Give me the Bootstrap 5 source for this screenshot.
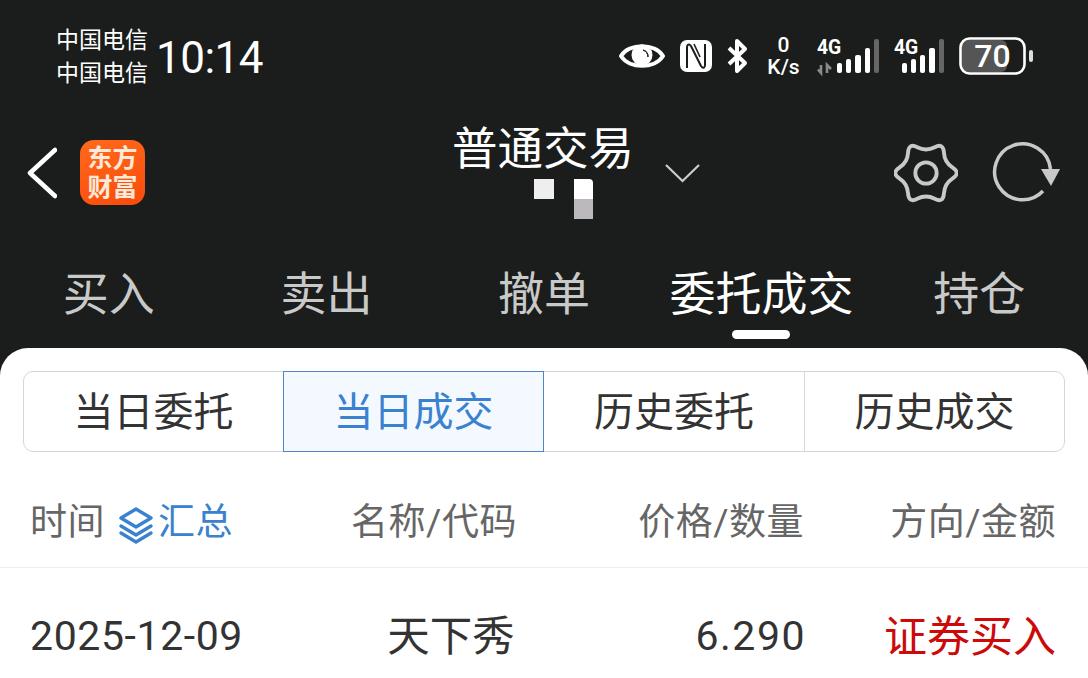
<!DOCTYPE html>
<html lang="zh-CN">
<head>
  <meta charset="UTF-8">
  <meta name="viewport" content="width=device-width, initial-scale=1.0">
  <title>普通交易</title>
  <link href="https://cdn.jsdelivr.net/npm/bootstrap@5.3.0/dist/css/bootstrap.min.css" rel="stylesheet">
  <style>
    html, body { height: 100%; overflow: hidden; }
    body {
      background-color: #1a1d1b;
      font-family: Roboto, "Noto Sans CJK SC", sans-serif;
      color: #333;
    }
    .screen { height: 678px; }

    .status-row { height: 105px; flex-shrink: 0; padding: 6px 54px 0 56px; color: #fff; }
    .carrier { font-size: 23px; line-height: 33px; width: 100px; padding-top: 2px; }
    .clock { font-size: 44px; line-height: 1; letter-spacing: -0.5px; padding-top: 4px; }
    .status-icons { margin-left: auto; height: 42px; }
    .eye-icon { margin-right: 15px; margin-left: 2px; }
    .nfc-icon { margin-right: 14px; }
    .speed-text { width: 35px; font-size: 21px; line-height: 22px; text-align: center; font-weight: 500; margin-left: 18px; }
    .sig-wrap { height: 38px; margin-left: 16px; margin-top: 4px; }
    .sig-wrap.second { margin-left: 14px; }
    .gen-text { font-size: 21px; line-height: 18px; margin-top: -1px; font-weight: 700; color: #fff; transform: scaleX(.92); transform-origin: 0 0; }
    .batt-wrap { position: relative; width: 75px; height: 38px; margin-left: 15px; }
    .batt-num { position: absolute; left: 0; width: 67px; top: 0; text-align: center; font-size: 32px; line-height: 38px; font-weight: 500; }

    .title-row { height: 135px; flex-shrink: 0; padding-left: 27px; padding-right: 27px; }
    .left-group { width: 427px; gap: 23px; }
    .logo-box {
      width: 65px; height: 65px; border-radius: 14px;
      background: linear-gradient(160deg, #ff6a1c, #fb4a0c);
      color: #ffe9d8; font-size: 25px; line-height: 29px; font-weight: 700;
      text-align: center; padding-top: 4px;
    }
    .title-block { width: 178px; margin-top: -6px; }
    .title-text { font-size: 45.500px; line-height: 52px; padding-top: 3px; color: #fff; white-space: nowrap; margin-left: -2px; }
    .mask-blocks { gap: 20px; padding-left: 80px; margin-top: 3px; height: 40px; }
    .mask-a { width: 20px; height: 20px; background: #eee; }
    .mask-b { width: 19px; height: 40px; background: linear-gradient(#fff 50%, #bbb9bb 50%); border-top-right-radius: 4px; }
    .caret-box { margin-left: 33px; }
    .right-group { margin-left: auto; gap: 33px; }

    .tab-row { height: 108px; flex-shrink: 0; }
    .tab-item { position: relative; height: 108px; font-size: 46px; line-height: 1; color: #c9c9c9; padding-top: 31px; }
    .tab-item.on { color: #fff; }
    .tab-item.on::after {
      content: ""; position: absolute; left: 50%; bottom: 9px; width: 58px; height: 9px;
      margin-left: -30px; border-radius: 5px; background: #fff;
    }

    .sheet { background: #fff; border-radius: 28px 28px 0 0; padding-top: 23px; flex: 1; min-height: 0; overflow: hidden; }
    .seg-group { margin: 0 23px; width: 1042px; display: flex; }
    .seg-group > .seg-btn {
      height: 81px; font-size: 40px; line-height: 1; color: #333; padding: 2px 0 0;
      border: 1px solid #d6d6d6; border-radius: 10px; background: #fff; flex: 0 0 261px; transition: none;
    }
    .seg-group > .seg-btn.wide-one { flex-basis: 262px; }
    .seg-group > .seg-btn.picked, .seg-group > .seg-btn.picked:hover { color: #3a82d0; border-color: #4a86c8; background: #f4f9ff; z-index: 2; }

    .grid-row { display: grid; grid-template-columns: 290px 228px 256px 252px; padding: 0 32px 0 30px; align-items: center; }
    .head-row { height: 116px; padding-top: 26px; border-bottom: 1px solid #eee; font-size: 37px; letter-spacing: .5px; color: #666; white-space: nowrap; }
    .stack-icon { margin: 4px 4px 0 13px; }
    .sum-link { color: #3a82d0; }
    .data-row { height: 138px; font-size: 43px; color: #333; white-space: nowrap; }
    .name-cell { padding-left: 34px; font-size: 42.500px; }
    .num-cell { font-size: 41px; letter-spacing: .6px; }
    .price-cell { letter-spacing: 1.500px; margin-right: -2px; }
    .dir-buy { color: #cc0a0a; }
  </style>
</head>
<body>
  <div class="screen d-flex flex-column">
    <div class="status-row d-flex align-items-center">
      <div class="carrier">中国电信<br>中国电信</div>
      <div class="clock">10:14</div>
      <div class="status-icons d-flex align-items-center">
        <svg width="46" height="34" viewBox="0 0 46 34" class="eye-icon">
          <path d="M2 17C10 4 36 4 44 17C36 30 10 30 2 17Z" fill="none" stroke="#fff" stroke-width="4" stroke-linejoin="round"/>
          <circle cx="23" cy="16" r="10.500" fill="#fff"/>
          <path d="M24 11a6 6 0 0 1 5 7a8 8 0 0 0-5-7Z" fill="#1a1d1b" stroke="#1a1d1b"/>
        </svg>
        <svg width="32" height="34" viewBox="0 0 32 34" class="nfc-icon">
          <rect x="0" y="1" width="32" height="32" rx="7" fill="#fff"/>
          <path d="M7 29V9C7 5 9 4.500 11 7L21 27C23 30 25 29 25 26V5" fill="none" stroke="#1a1d1b" stroke-width="2"/>
          <path d="M14 5L20 18" stroke="#1a1d1b" stroke-width="1.600"/>
        </svg>
        <svg width="22" height="36" viewBox="0 0 22 36">
          <path d="M3 10L19 25L11 33V3L19 11L3 26" fill="none" stroke="#fff" stroke-width="4" stroke-linejoin="round"/>
        </svg>
        <div class="speed-text">0<br>K/s</div>
        <div class="sig-wrap position-relative">
          <svg width="63" height="38" viewBox="0 0 63 38">
            <path d="M4 26V34L1 30.500M4 26M10 34V26L14 30" fill="none" stroke="#8a8a8a" stroke-width="2.600"/>
            <rect x="20" y="24" width="5" height="10" rx="2" fill="#fff"/>
            <rect x="29" y="20" width="5" height="14" rx="2" fill="#fff"/>
            <rect x="38" y="16" width="6" height="18" rx="2" fill="#fff"/>
            <rect x="48" y="9" width="5" height="25" rx="2" fill="#fff"/>
            <rect x="57" y="0" width="5" height="34" rx="2" fill="#666"/>
          </svg>
          <span class="gen-text position-absolute top-0 start-0">4G</span>
        </div>
        <div class="sig-wrap second position-relative">
          <svg width="50" height="38" viewBox="0 0 50 38">
            <rect x="8" y="24" width="5" height="10" rx="2" fill="#fff"/>
            <rect x="17" y="20" width="5" height="14" rx="2" fill="#fff"/>
            <rect x="26" y="16" width="5" height="18" rx="2" fill="#fff"/>
            <rect x="35" y="9" width="6" height="25" rx="2" fill="#fff"/>
            <rect x="45" y="0" width="5" height="34" rx="2" fill="#666"/>
          </svg>
          <span class="gen-text position-absolute top-0 start-0">4G</span>
        </div>
        <div class="batt-wrap">
          <svg width="75" height="38" viewBox="0 0 75 38">
            <rect x="3" y="3" width="45" height="32" rx="6" fill="#555"/>
            <rect x="1.500" y="1.500" width="64" height="35" rx="9" fill="none" stroke="#fff" stroke-width="2.600"/>
            <rect x="70" y="13" width="4" height="12" rx="2" fill="#ddd"/>
          </svg>
          <div class="batt-num">70</div>
        </div>
      </div>
    </div>

    <div class="title-row d-flex align-items-center">
      <div class="left-group d-flex align-items-center">
        <svg width="30" height="52" viewBox="0 0 30 52">
          <path d="M28 3L3 26L28 49" fill="none" stroke="#fff" stroke-width="4.500" stroke-linecap="round" stroke-linejoin="round"/>
        </svg>
        <div class="logo-box">东方<br>财富</div>
      </div>
      <div class="title-block">
        <div class="title-text">普通交易</div>
        <div class="mask-blocks d-flex">
          <div class="mask-a"></div>
          <div class="mask-b"></div>
        </div>
      </div>
      <div class="caret-box">
        <svg width="35" height="20" viewBox="0 0 35 20">
          <path d="M1 2L17.500 18L34 2" fill="none" stroke="#ccc" stroke-width="2.200"/>
        </svg>
      </div>
      <div class="right-group d-flex align-items-center">
        <svg width="64" height="64" viewBox="-1 -1 66 66">
          <path d="M59.500 37.500Q68 32 59.500 26.500Q51.050 21 50.500 10.900Q50 .8 41 5.400Q32 10 23 5.400Q14 .8 13.500 10.900Q12.950 21 4.500 26.500Q-4 32 4.500 37.500Q12.950 43 13.500 53.100Q14 63.200 23 58.600Q32 54 41 58.600Q50 63.200 50.500 53.100Q51.050 43 59.500 37.500Z" fill="none" stroke="#c8c8c8" stroke-width="4"/>
          <circle cx="32" cy="32" r="11" fill="none" stroke="#c8c8c8" stroke-width="4"/>
        </svg>
        <svg width="70" height="66" viewBox="0 0 70 66">
          <path d="M52 51A28 28 0 1 1 59.500 29" fill="none" stroke="#c8c8c8" stroke-width="3.500"/>
          <path d="M50 29H69L60 46Z" fill="#c8c8c8"/>
        </svg>
      </div>
    </div>

    <div class="tab-row nav nav-justified flex-nowrap">
      <div class="nav-item tab-item">买入</div>
      <div class="nav-item tab-item">卖出</div>
      <div class="nav-item tab-item">撤单</div>
      <div class="nav-item tab-item on">委托成交</div>
      <div class="nav-item tab-item">持仓</div>
    </div>

    <div class="sheet">
      <div class="btn-group seg-group" role="group">
        <button type="button" class="btn seg-btn">当日委托</button>
        <button type="button" class="btn seg-btn picked">当日成交</button>
        <button type="button" class="btn seg-btn wide-one">历史委托</button>
        <button type="button" class="btn seg-btn">历史成交</button>
      </div>

      <div class="grid-row head-row">
        <div class="d-flex align-items-center">
          <span>时间</span>
          <svg width="36" height="38" viewBox="0 0 36 38" class="stack-icon">
            <path d="M18 3L33 12L18 21L3 12Z" fill="none" stroke="#3a82d0" stroke-width="3.400" stroke-linejoin="round"/>
            <path d="M3 20L18 29L33 20M3 27L18 36L33 27" fill="none" stroke="#3a82d0" stroke-width="3.400" stroke-linecap="round" stroke-linejoin="round"/>
          </svg>
          <span class="sum-link">汇总</span>
        </div>
        <div class="text-center">名称/代码</div>
        <div class="text-end">价格/数量</div>
        <div class="text-end">方向/金额</div>
      </div>

      <div class="grid-row data-row">
        <div class="num-cell">2025-12-09</div>
        <div class="text-center name-cell">天下秀</div>
        <div class="text-end num-cell price-cell">6.290</div>
        <div class="text-end dir-buy">证券买入</div>
      </div>
    </div>
  </div>

  <script src="https://cdn.jsdelivr.net/npm/bootstrap@5.3.0/dist/js/bootstrap.bundle.min.js"></script>
</body>
</html>
